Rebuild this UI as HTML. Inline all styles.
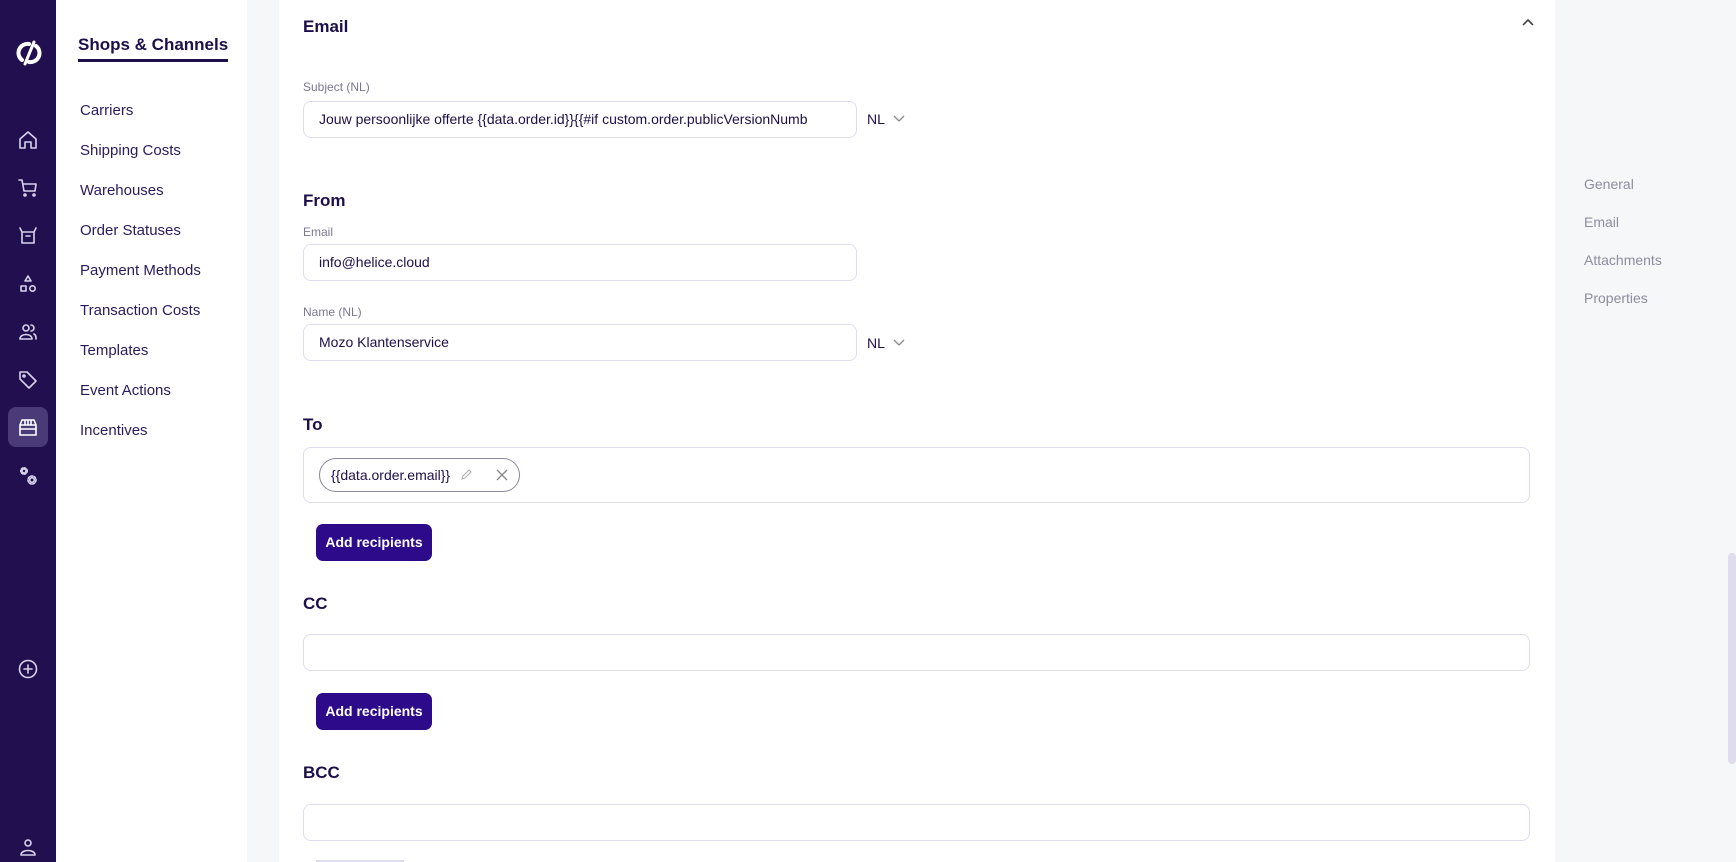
<!DOCTYPE html>
<html><head><meta charset="utf-8"><style>
*{box-sizing:border-box;margin:0;padding:0}
html{width:1736px;height:862px;overflow:hidden;background:#f6f7f9}
body{width:1736px;height:862px;overflow:hidden;background:#f6f7f9;font-family:"Liberation Sans",sans-serif;color:#1d0f4a;position:relative}
.sb{position:absolute;left:0;top:0;width:56px;height:862px;background:#210f50}
.ic{position:absolute;left:16px;width:24px;height:24px}
.ic svg{width:24px;height:24px;fill:none;stroke:#d8d3ea;stroke-width:1.6;stroke-linecap:round;stroke-linejoin:round}
.nav{position:absolute;left:56px;top:0;width:191px;height:862px;background:#fff}
.nav h1{position:absolute;left:22px;top:35px;font-size:17px;font-weight:bold;color:#1d0f4a;border-bottom:3px solid #1d0f4a;padding-bottom:4px;white-space:nowrap}
.nav a{position:absolute;left:24px;font-size:15px;color:#2a1b5c;white-space:nowrap}
.card{position:absolute;left:279px;top:0;width:1276px;height:862px;background:#fff;overflow:hidden}
.h{position:absolute;left:24px;font-size:17px;font-weight:bold;color:#1d0f4a}
.lbl{position:absolute;left:24px;font-size:12px;color:#7a7890}
.inp{position:absolute;left:24px;width:554px;height:37px;border:1px solid #dedcef;border-radius:8px;font-size:14px;padding:0 15px;line-height:35px;color:#1d0f4a;white-space:nowrap;overflow:hidden}
.wide{width:1227px}
.nl{position:absolute;left:588px;font-size:14px;color:#1d0f4a}
.nl svg{position:absolute;left:26px;top:4px}
.btn{position:absolute;left:37px;width:116px;height:37px;background:#2d0a8a;color:#fff;border-radius:7px;font-size:14px;font-weight:bold;text-align:center;line-height:37px}
.rn{position:absolute;left:1584px;font-size:14px;color:#8d8ca0}
</style></head><body>
<div class="sb">
<div class="ic" style="top:38px;left:14px;width:30px;height:30px"><svg viewBox="0 0 30 30" style="width:30px;height:30px;stroke:#fff;stroke-width:4"><path d="M8 22 A9 9 0 0 1 15 6 M22 8 A9 9 0 0 1 15 24"/><path d="M11 26 L20 4" stroke-width="3"/></svg></div>
<div class="ic" style="top:128px"><svg viewBox="0 0 24 24"><path d="M4 11 L12 4 L20 11 V20 H15 V14 H9 V20 H4 Z"/></svg></div>
<div class="ic" style="top:176px"><svg viewBox="0 0 24 24"><path d="M3 4 H6 L8 15 H19 L20 8 H7"/><circle cx="9" cy="19" r="1"/><circle cx="18" cy="19" r="1"/></svg></div>
<div class="ic" style="top:223px"><svg viewBox="0 0 24 24"><path d="M4 5 L6 9 H18 L20 5 M6 9 V20 H18 V9 M10 13 H14"/></svg></div>
<div class="ic" style="top:272px"><svg viewBox="0 0 24 24"><path d="M12 4 L15 9 H9 Z"/><rect x="5" y="14" width="5" height="5"/><circle cx="16.5" cy="16.5" r="2.7"/></svg></div>
<div class="ic" style="top:320px"><svg viewBox="0 0 24 24"><circle cx="10" cy="8" r="3"/><path d="M4 19 C4 13 16 13 16 19 Z M15 5 A3 3 0 0 1 15 11 M18 14 C20 15 20 17 20 19"/></svg></div>
<div class="ic" style="top:368px"><svg viewBox="0 0 24 24"><path d="M4 4 H11 L20 13 L13 20 L4 11 Z"/><circle cx="8" cy="8" r="1"/></svg></div>
<div style="position:absolute;left:8px;top:407px;width:40px;height:40px;border-radius:8px;background:#4a3b78"></div>
<div class="ic" style="top:416px"><svg viewBox="0 0 24 24" style="stroke:#fff"><path d="M4 9 L6 4 H18 L20 9 Z M4 9 V19 H20 V9 M4 13 H20 M9 4 V9 M12 4 V9 M15 4 V9"/></svg></div>
<div class="ic" style="top:464px"><svg viewBox="0 0 24 24"><circle cx="8" cy="7" r="2" stroke-dasharray="2 1"/><circle cx="8" cy="7" r="3.2" stroke-dasharray="1.5 1.5"/><circle cx="16" cy="16" r="2.3"/><circle cx="16" cy="16" r="4" stroke-dasharray="2 1.5"/></svg></div>
<div class="ic" style="top:657px"><svg viewBox="0 0 24 24"><circle cx="12" cy="12" r="8.5"/><path d="M12 8 V16 M8 12 H16"/></svg></div>
<div class="ic" style="top:835px"><svg viewBox="0 0 24 24"><circle cx="12" cy="8" r="3"/><path d="M5 20 C5 14 19 14 19 20 Z"/></svg></div>
</div>
<div class="nav">
<h1>Shops &amp; Channels</h1>
<a style="top:102px">Carriers</a>
<a style="top:142px">Shipping Costs</a>
<a style="top:182px">Warehouses</a>
<a style="top:222px">Order Statuses</a>
<a style="top:262px">Payment Methods</a>
<a style="top:302px">Transaction Costs</a>
<a style="top:342px">Templates</a>
<a style="top:382px">Event Actions</a>
<a style="top:422px">Incentives</a>
</div>
<div class="card">
<div class="h" style="top:17px">Email</div>
<svg style="position:absolute;left:1242px;top:18px" width="14" height="10" viewBox="0 0 14 10"><path d="M2 7 L7 2 L12 7" stroke="#444" stroke-width="1.6" fill="none"/></svg>
<div class="lbl" style="top:80px">Subject (NL)</div>
<div class="inp" style="top:101px">Jouw persoonlijke offerte {{data.order.id}}{{#if custom.order.publicVersionNumb</div>
<div class="nl" style="top:111px">NL<svg width="12" height="8" viewBox="0 0 12 8"><path d="M1 1 L6 6 L11 1" stroke="#888" stroke-width="1.3" fill="none"/></svg></div>
<div class="h" style="top:191px">From</div>
<div class="lbl" style="top:225px">Email</div>
<div class="inp" style="top:244px">info@helice.cloud</div>
<div class="lbl" style="top:305px">Name (NL)</div>
<div class="inp" style="top:324px">Mozo Klantenservice</div>
<div class="nl" style="top:335px">NL<svg width="12" height="8" viewBox="0 0 12 8"><path d="M1 1 L6 6 L11 1" stroke="#888" stroke-width="1.3" fill="none"/></svg></div>
<div class="h" style="top:415px">To</div>
<div class="inp wide" style="top:447px;height:56px"></div>
<div style="position:absolute;left:40px;top:458px;width:201px;height:34px;border:1px solid #8a889a;border-radius:17px;font-size:14px;line-height:32px;padding-left:11px;color:#1d0f4a">{{data.order.email}}
<svg style="position:absolute;left:140px;top:10px" width="12" height="12" viewBox="0 0 12 12"><path d="M2 10 L3 7 L9 1 L11 3 L5 9 Z" stroke="#aaa" fill="none"/></svg>
<svg style="position:absolute;left:176px;top:10px" width="12" height="12" viewBox="0 0 12 12"><path d="M1 1 L11 11 M11 1 L1 11" stroke="#888" stroke-width="1.3"/></svg></div>
<div class="btn" style="top:524px">Add recipients</div>
<div class="h" style="top:594px">CC</div>
<div class="inp wide" style="top:634px"></div>
<div class="btn" style="top:693px">Add recipients</div>
<div class="h" style="top:763px">BCC</div>
<div class="inp wide" style="top:804px"></div>
<div style="position:absolute;top:860px;left:37px;width:88px;height:2px;background:#dedcef"></div>
</div>
<div class="rn" style="top:176px">General</div>
<div class="rn" style="top:214px">Email</div>
<div class="rn" style="top:252px">Attachments</div>
<div class="rn" style="top:290px">Properties</div>
<div style="position:absolute;left:1728px;top:553px;width:8px;height:211px;background:#dfdced;border-radius:4px"></div>
</body></html>
